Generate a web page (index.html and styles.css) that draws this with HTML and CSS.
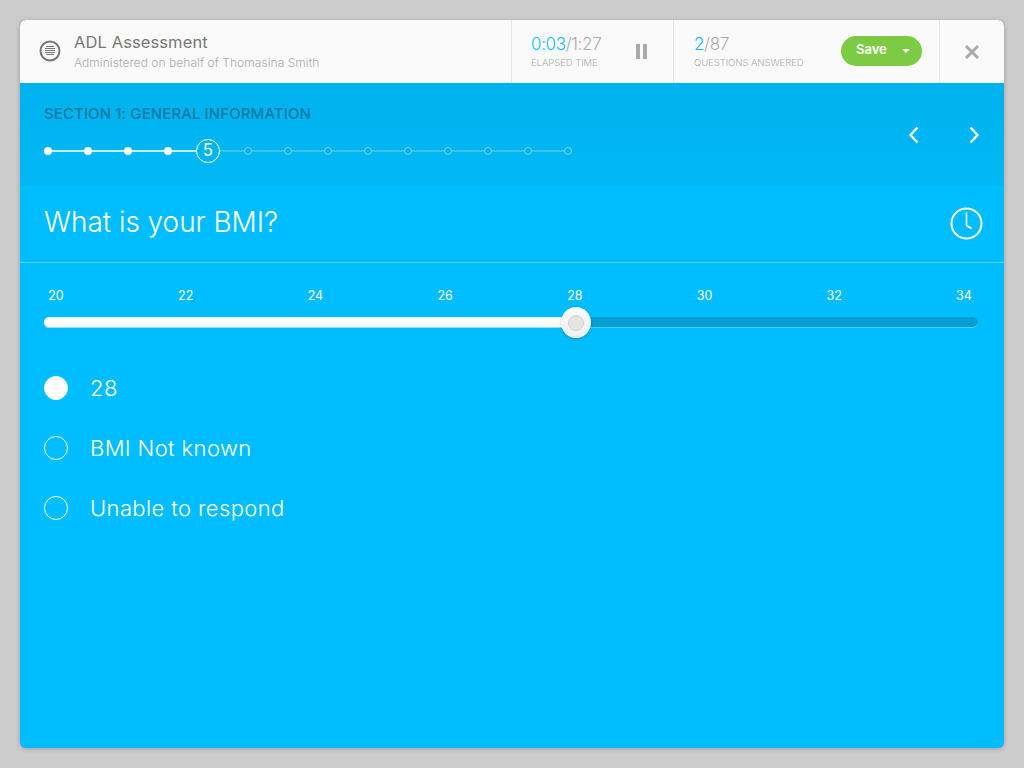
FILE: index.html
```html
<!DOCTYPE html>
<html lang="en">
<head>
<meta charset="utf-8">
<title>ADL Assessment</title>
<link rel="stylesheet" href="styles.css">
</head>
<body>
<main class="app">
  <header class="topbar">
    <div class="title-block">
      <svg class="menu-icon" width="22" height="22" viewBox="0 0 22 22" aria-hidden="true">
        <circle cx="11" cy="11" r="9.5" fill="none" stroke="#777" stroke-width="2"/>
        <path d="M7 6.5h8M6 8.5h10M6 10.5h10M6 12.5h10M7 14.5h8" stroke="#777" stroke-width="1"/>
      </svg>
      <div class="title-text">
        <div class="title">ADL Assessment</div>
        <div class="subtitle">Administered on behalf of Thomasina Smith</div>
      </div>
    </div>
    <div class="stat stat-time">
      <div class="stat-text">
        <div class="stat-value"><span class="accent">0:03</span>/1:27</div>
        <div class="stat-label">ELAPSED TIME</div>
      </div>
      <div class="pause"><span></span><span></span></div>
    </div>
    <div class="stat stat-questions">
      <div class="stat-text">
        <div class="stat-value"><span class="accent">2</span>/87</div>
        <div class="stat-label">QUESTIONS ANSWERED</div>
      </div>
      <button class="save"><span>Save</span><i class="caret"></i></button>
    </div>
    <div class="close">
      <svg width="16" height="16" viewBox="0 0 16 16" aria-hidden="true">
        <path d="M2 2l12 12M14 2L2 14" stroke="#aaa" stroke-width="3"/>
      </svg>
    </div>
  </header>

  <section class="section-band">
    <div class="section-left">
      <h2 class="section-title">SECTION 1: GENERAL INFORMATION</h2>
      <div class="stepper">
        <i class="dot"></i><i class="seg"></i>
        <i class="dot"></i><i class="seg"></i>
        <i class="dot"></i><i class="seg"></i>
        <i class="dot"></i><i class="seg"></i>
        <b class="current">5</b><i class="seg todo"></i>
        <i class="ring"></i><i class="seg todo"></i>
        <i class="ring"></i><i class="seg todo"></i>
        <i class="ring"></i><i class="seg todo"></i>
        <i class="ring"></i><i class="seg todo"></i>
        <i class="ring"></i><i class="seg todo"></i>
        <i class="ring"></i><i class="seg todo"></i>
        <i class="ring"></i><i class="seg todo"></i>
        <i class="ring"></i><i class="seg todo"></i>
        <i class="ring"></i>
      </div>
    </div>
    <nav class="pager">
      <svg width="12" height="18" viewBox="0 0 12 18" aria-hidden="true"><path d="M9.5 1.5L2.5 9l7 7.5" fill="none" stroke="#fff" stroke-width="2.4"/></svg>
      <svg width="12" height="18" viewBox="0 0 12 18" aria-hidden="true"><path d="M2.5 1.5L9.5 9l-7 7.5" fill="none" stroke="#fff" stroke-width="2.4"/></svg>
    </nav>
  </section>

  <section class="question">
    <h1 class="question-text">What is your BMI?</h1>
    <svg class="clock" width="33" height="33" viewBox="0 0 33 33" aria-hidden="true">
      <circle cx="16.5" cy="16.5" r="15" fill="none" stroke="#fff" stroke-width="2"/>
      <path d="M16.5 5.5v13l5 3" fill="none" stroke="#fff" stroke-width="1.5"/>
    </svg>
  </section>

  <section class="answers">
    <div class="ticks">
      <span>20</span><span>22</span><span>24</span><span>26</span><span>28</span><span>30</span><span>32</span><span>34</span>
    </div>
    <div class="track">
      <div class="fill" style="width:56.96%"></div>
      <div class="rest"></div>
      <div class="thumb" style="left:56.96%"><span></span></div>
    </div>
    <ul class="options">
      <li class="option selected"><i class="radio"></i>28</li>
      <li class="option"><i class="radio"></i>BMI Not known</li>
      <li class="option"><i class="radio"></i>Unable to respond</li>
    </ul>
  </section>
</main>
</body>
</html>
```

FILE: styles.css
```css
* { box-sizing: border-box; }
html, body { height: 100%; }
body {
  margin: 0;
  padding: 20px;
  height: 768px;
  overflow: hidden;
  background: #cccccc;
  font-family: "Inter", "Liberation Sans", sans-serif;
  font-weight: 300;
}
.app {
  height: 728px;
  display: flex;
  flex-direction: column;
  background: #00bdff;
  border-radius: 6px;
  overflow: hidden;
  box-shadow: 0 1px 4px rgba(0,0,0,.25);
}
.topbar {
  flex: 0 0 63px;
  display: flex;
  background: #fafafa;
  color: #aaa;
}
.title-block {
  flex: 0 0 491px;
  display: flex;
  align-items: center;
  padding-left: 19px;
  gap: 13px;
}
.menu-icon { flex: none; margin-top: -2px; }
.title { font-size: 16.5px; line-height: 20px; font-weight: 400; color: #777; margin-top: -1px; letter-spacing: .1px; }
.subtitle { font-size: 12px; line-height: 16px; color: #aaa; margin-top: 3px; font-weight: 300; letter-spacing: .05px; }
.stat {
  display: flex;
  align-items: center;
  justify-content: space-between;
  border-left: 1px solid #e6e6e6;
  padding-left: 19px;
}
.stat-time { flex: 0 0 162px; padding-right: 25px; }
.stat-questions { flex: 0 0 266px; padding-left: 20px; padding-right: 17px; }
.stat-value { font-size: 17px; line-height: 20px; color: #aaa; margin-top: -1px; letter-spacing: -.35px; }
.accent { color: #0dbcfc; }
.stat-label { font-size: 9.5px; line-height: 12px; margin-top: 3px; color: #aaa; letter-spacing: -.05px; }
.pause { display: flex; gap: 3px; margin-right: 1px; }
.pause span { width: 4px; height: 15px; background: #aaa; }
.save {
  width: 81px;
  height: 30px;
  border: 0;
  border-radius: 15px;
  background: #7dcb45;
  color: #fff;
  font: 600 13px "Inter", sans-serif;
  display: flex;
  align-items: center;
  padding: 0 12px 3px 15px;
  margin-top: -2px;
  justify-content: space-between;
}
.caret {
  width: 0; height: 0;
  border: 4px solid transparent;
  border-top-color: #fff;
  border-bottom: 0;
  margin-top: 3px;
}
.close {
  flex: 1;
  display: flex;
  align-items: center;
  justify-content: center;
  border-left: 1px solid #e6e6e6;
  padding-top: 1px;
}
.section-band {
  flex: 0 0 103px;
  display: flex;
  justify-content: space-between;
  background: linear-gradient(#00b2ee, #00b8f5);
  padding: 22px 24px 0;
}
.section-title {
  margin: 0;
  font-size: 15px;
  line-height: 18px;
  font-weight: 500;
  color: #0678a6;
  letter-spacing: .1px;
}
.stepper {
  width: 528px;
  height: 24px;
  margin-top: 16px;
  display: flex;
  align-items: center;
}
.dot { flex: none; width: 8px; height: 8px; border-radius: 50%; background: #fff; }
.ring { flex: none; width: 8px; height: 8px; border-radius: 50%; border: 1px solid #7fd6f6; }
.seg { flex: none; width: 32px; height: 2px; background: #c5edfb; }
.seg.todo { background: #3fc3f3; }
.current {
  flex: none;
  width: 24px;
  height: 24px;
  margin: 0 -8px;
  position: relative;
  border: 1.5px solid #fff;
  border-radius: 50%;
  background: #00b4f0;
  color: #fff;
  font-size: 17px;
  font-weight: 400;
  line-height: 21px;
  text-align: center;
}
.pager {
  width: 72px;
  display: flex;
  justify-content: space-between;
  align-items: flex-start;
  margin: 21px 0 0;
  padding: 0;
}
.question {
  flex: 0 0 77px;
  display: flex;
  align-items: center;
  justify-content: space-between;
  padding: 0 21px 2px 24px;
  border-bottom: 1px solid #5dd3fb;
}
.clock { margin-top: 1px; }
.question-text {
  margin: 0;
  font-size: 28px;
  font-weight: 300;
  color: #fff;
  letter-spacing: -.05px;
  margin-top: -3px;
}
.answers { padding: 25px 24px 0; }
.ticks {
  display: flex;
  justify-content: space-between;
  padding: 0 8px 0 4px;
  font-size: 12.5px;
  font-weight: 400;
  line-height: 16px;
  color: #fff;
}
.ticks span { width: 16px; text-align: center; }
.track {
  position: relative;
  display: flex;
  height: 11px;
  margin: 13px 2px 0 0;
}
.fill {
  background: #fff;
  border-radius: 6px 0 0 6px;
  box-shadow: inset 0 -1px 0 #8fe0fb, inset 0 1px 0 #d8f5ff;
}
.rest {
  flex: 1;
  background: #079fd3;
  border-radius: 0 6px 6px 0;
  box-shadow: inset 0 -1px 0 #4fcdf7;
}
.thumb {
  position: absolute;
  top: -10px;
  width: 30px;
  height: 31px;
  margin-left: -15px;
  border-radius: 50%;
  background: linear-gradient(#fbfbfb, #efefef);
  box-shadow: 0 1px 3px rgba(0,0,0,.25);
  display: flex;
  align-items: center;
  justify-content: center;
}
.thumb span {
  width: 16px;
  height: 16px;
  border-radius: 50%;
  background: #e4e4e4;
  border: 1px solid #d4d4d4;
}
.options {
  list-style: none;
  margin: 0;
  padding: 30px 0 0;
}
.option {
  height: 60px;
  display: flex;
  align-items: center;
  gap: 22px;
  font-size: 22px;
  color: #fff;
  letter-spacing: .38px;
}
.radio {
  flex: none;
  width: 24px;
  height: 24px;
  border-radius: 50%;
  border: 1.5px solid #fff;
}
.selected .radio { background: #fff; }
```
